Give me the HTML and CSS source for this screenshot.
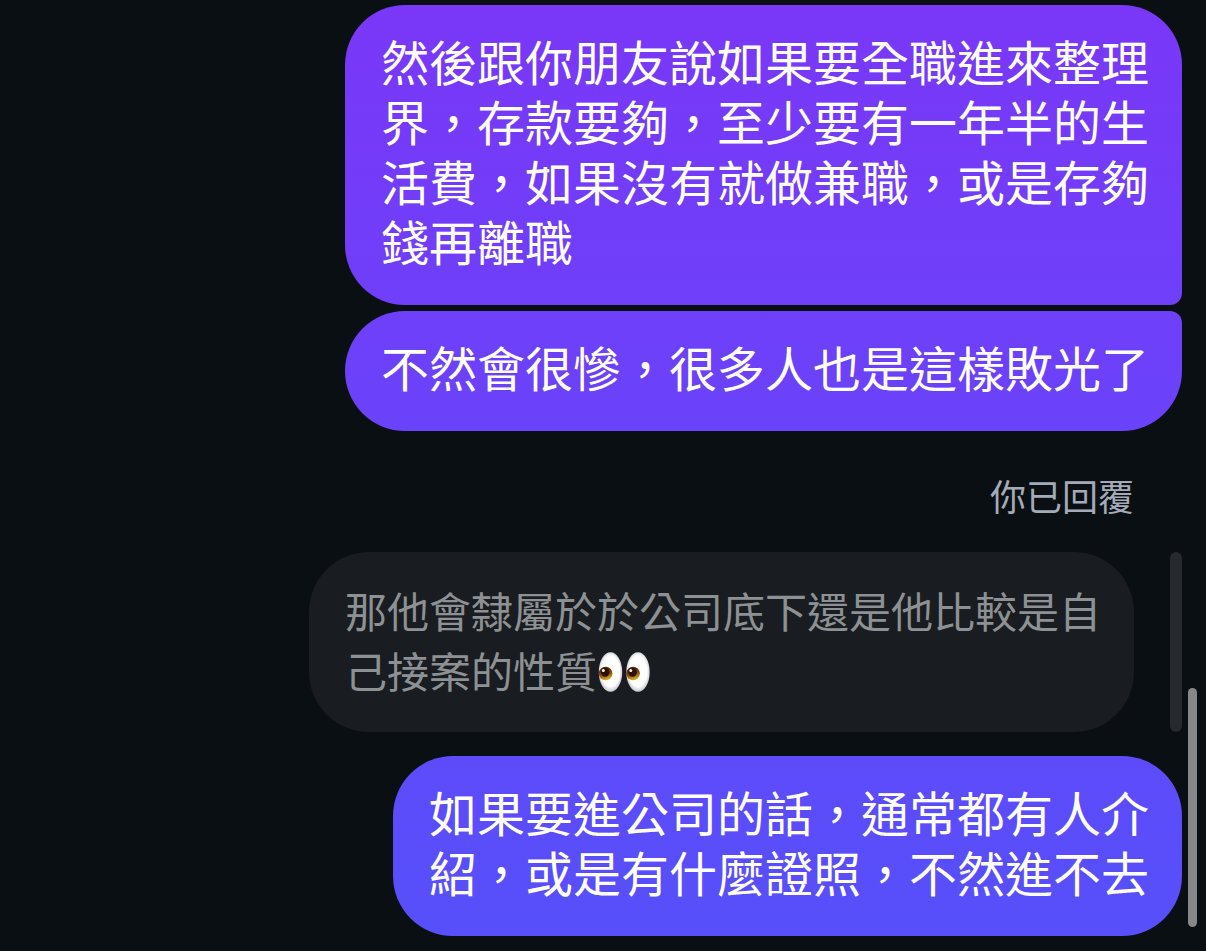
FILE: index.html
```html
<!DOCTYPE html>
<html lang="zh-Hant">
<head>
<meta charset="utf-8">
<meta name="viewport" content="width=device-width, initial-scale=1">
<title>聊天</title>
<link rel="stylesheet" href="styles.css">
</head>
<body>
<main class="chat">
  <p class="bubble sent first">然後跟你朋友說如果要全職進來整理界，存款要夠，至少要有一年半的生活費，如果沒有就做兼職，或是存夠錢再離職</p>
  <p class="bubble sent last">不然會很慘，很多人也是這樣敗光了</p>
  <p class="reply-label">你已回覆</p>
  <div class="quote-row">
    <blockquote class="bubble quote">那他會隸屬於於公司底下還是他比較是自己接案的性質<svg class="eyes" viewBox="0 0 54 42" role="img" aria-label="雙眼">
      <defs>
        <radialGradient id="white" cx=".5" cy=".48" r=".55"><stop offset=".7" stop-color="#fff"/><stop offset="1" stop-color="#b9bcbe"/></radialGradient>
        <linearGradient id="iris" x2="0.3" y2="1"><stop offset=".3" stop-color="#54260a"/><stop offset=".65" stop-color="#8a5208"/><stop offset="1" stop-color="#dba51c"/></linearGradient>
      </defs>
      <g id="eye"><ellipse cx="13.5" cy="21" rx="11.7" ry="19.8" fill="url(#white)"/><circle cx="8.6" cy="22.5" r="6.8" fill="url(#iris)"/><circle cx="8.2" cy="21.5" r="4.2" fill="#2a1206"/><circle cx="6.3" cy="19.5" r="1.5" fill="#fff"/></g>
      <use href="#eye" x="27.5"/>
    </svg></blockquote>
    <span class="quote-bar"></span>
  </div>
  <p class="bubble sent answer">如果要進公司的話，通常都有人介紹，或是有什麼證照，不然進不去</p>
  <span class="scroll-thumb"></span>
</main>
</body>
</html>
```
FILE: styles.css
```css
* { box-sizing: border-box; }
body { margin: 0; background: #0a0f13; color: #fff; font-family: "Noto Sans CJK TC", sans-serif; }
.chat { position: relative; display: flex; flex-direction: column; align-items: flex-end; min-height: 100vh; padding: 5px 24px 15px; }
.bubble { margin: 0; padding: 25px 33px 35px 36px; border-radius: 60px; font-size: 48px; line-height: 60px; overflow-wrap: anywhere; }
.sent { max-width: 837px; background: linear-gradient(#7a37f8, #5650fb) fixed; }
.first { border-bottom-right-radius: 12px; }
.last { margin-top: 6px; border-top-right-radius: 12px; }
.reply-label { margin: 40px 48px 0 0; color: #a4abb8; font-size: 36px; line-height: 48px; }
.quote-row { display: flex; gap: 36px; margin-top: 33px; }
.quote { max-width: 825px; padding: 28px 33px 32px 36px; background: #191c20; color: #8d9193; font-size: 42px; }
.eyes { width: 54px; height: 42px; vertical-align: -5px; }
.quote-bar { flex: none; width: 12px; border-radius: 6px; background: #26292d; }
.answer { max-width: 789px; margin-top: 24px; }
.scroll-thumb { position: absolute; right: 9px; bottom: 24px; width: 9px; height: 239px; border-radius: 5px; background: #868889; }
```
